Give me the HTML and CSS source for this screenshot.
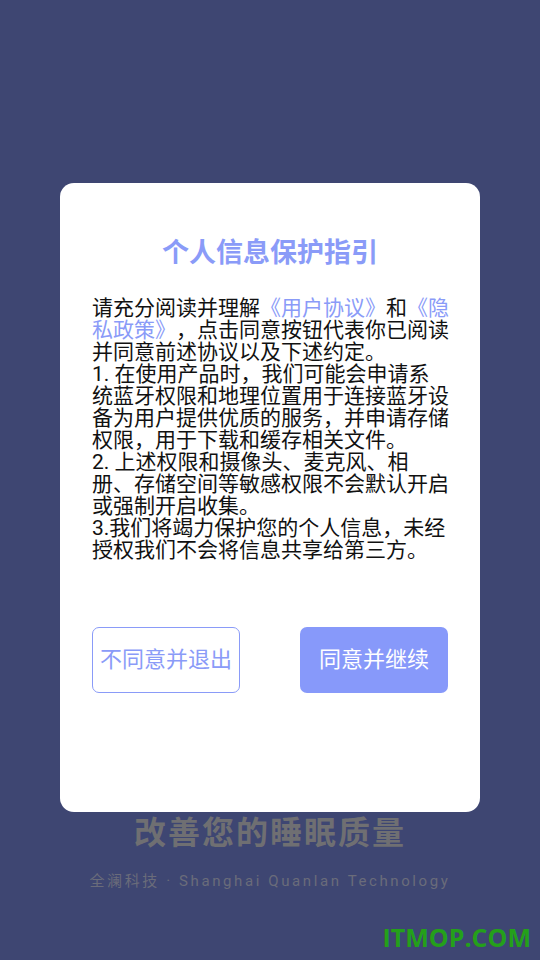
FILE: index.html
```html
<!DOCTYPE html>
<html lang="zh-CN">
<head>
<meta charset="utf-8">
<link rel="stylesheet" href="styles.css">
</head>
<body>
<div class="splash">
  <div class="slogan">改善您的睡眠质量</div>
  <div class="company">全澜科技 · Shanghai Quanlan Technology</div>
</div>
<div class="dialog">
  <h1 class="title">个人信息保护指引</h1>
  <p class="content">请充分阅读并理解<span class="link">《用户协议》</span>和<span class="link">《隐私政策》</span>，点击同意按钮代表你已阅读并同意前述协议以及下述约定。<br>1. 在使用产品时，我们可能会申请系统蓝牙权限和地理位置用于连接蓝牙设备为用户提供优质的服务，并申请存储权限，用于下载和缓存相关文件。<br>2. 上述权限和摄像头、麦克风、相册、存储空间等敏感权限不会默认开启或强制开启收集。<br>3.我们将竭力保护您的个人信息，未经授权我们不会将信息共享给第三方。</p>
  <div class="actions">
    <button class="btn btn-outline">不同意并退出</button>
    <button class="btn btn-fill">同意并继续</button>
  </div>
</div>
<div class="watermark">ITMOP.COM</div>
</body>
</html>
```
FILE: styles.css
```css
html, body {
  margin: 0;
  padding: 0;
}
body {
  width: 540px;
  height: 960px;
  background: #3e4672;
  font-family: Roboto, "Noto Sans CJK SC", sans-serif;
  position: relative;
  overflow: hidden;
  text-spacing-trim: space-all;
}
.splash {
  display: flex;
  flex-direction: column;
  align-items: center;
  padding-top: 812px;
}
.slogan {
  font-size: 32px;
  font-weight: bold;
  color: #6f6f72;
  line-height: 42px;
  letter-spacing: 2px;
}
.company {
  margin-top: 18px;
  font-family: Roboto, "Noto Sans CJK SC", sans-serif;
  font-size: 15px;
  color: #6a6c7a;
  letter-spacing: 2.6px;
  line-height: 18px;
}
.dialog {
  position: absolute;
  left: 60px;
  top: 183px;
  width: 420px;
  height: 629px;
  box-sizing: border-box;
  background: #fff;
  border-radius: 14px;
  padding: 53px 0 0 32px;
}
.title {
  margin: 0;
  padding-right: 32px;
  text-align: center;
  font-size: 27px;
  font-weight: bold;
  line-height: 34px;
  color: #8a9bf8;
}
.content {
  margin: 27px 0 0;
  width: 358px;
  font-size: 21px;
  line-height: 22px;
  color: #111;
  text-spacing-trim: space-all;
}
.link {
  color: #8a9bf8;
}
.actions {
  margin-top: 66px;
  width: 356px;
  display: flex;
  justify-content: space-between;
}
.btn {
  width: 148px;
  height: 66px;
  box-sizing: border-box;
  border-radius: 7px;
  font-family: "Noto Sans CJK SC", sans-serif;
  font-size: 22px;
  line-height: 26px;
  padding: 0 0 6px;
}
.btn-outline {
  background: #fff;
  border: 1.5px solid #8a9bf8;
  color: #8a9bf8;
}
.btn-fill {
  background: #8799fa;
  border: none;
  color: #fff;
}
.watermark {
  position: absolute;
  right: 9px;
  top: 920px;
  font-family: "Open Sans", "DejaVu Sans", sans-serif;
  font-weight: bold;
  font-size: 25px;
  line-height: 34px;
  color: #24a01a;
}
```
